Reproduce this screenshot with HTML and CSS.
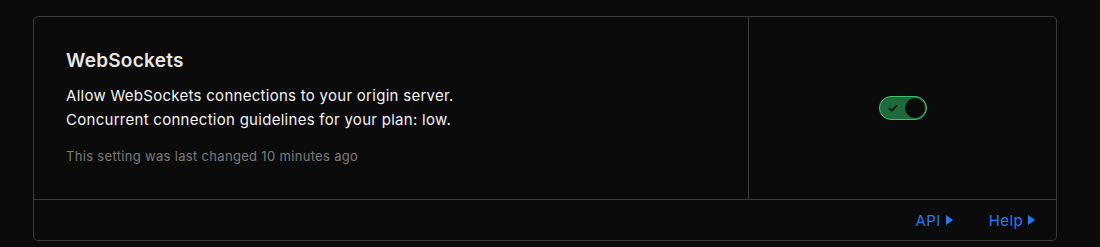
FILE: index.html
```html
<!DOCTYPE html>
<html>
<head>
<meta charset="utf-8">
<link rel="stylesheet" href="styles.css">
</head>
<body>
<div class="card">
  <div class="main">
    <div class="info">
      <h3 class="title">WebSockets</h3>
      <p class="desc">Allow WebSockets connections to your origin server.<br>Concurrent connection guidelines for your plan: low.</p>
      <p class="meta">This setting was last changed 10 minutes ago</p>
    </div>
    <div class="control">
      <button class="toggle" aria-pressed="true">
        <svg class="check" width="10" height="8" viewBox="0 0 10 8"><path d="M1 4 L3.8 6.6 L9 1.2" fill="none" stroke="#0b0b0b" stroke-width="1.6"/></svg>
        <span class="knob"></span>
      </button>
    </div>
  </div>
  <div class="footer">
    <a class="link" href="#">API <span class="tri"></span></a>
    <a class="link" href="#">Help <span class="tri"></span></a>
  </div>
</div>
</body>
</html>
```
FILE: styles.css
```css
* { box-sizing: border-box; }
html, body { margin: 0; background: #0b0b0b; }
body { padding: 16px 43px 0 33px; font-family: Inter, "Noto Sans", sans-serif; }
.card {
  border: 1px solid #3b3b3b;
  border-radius: 5px;
  width: 1024px;
  height: 225px;
  display: flex;
  flex-direction: column;
}
.main { display: flex; flex: 1; border-bottom: 1px solid #3b3b3b; }
.info { flex: 1; padding: 32px 32px 0 32px; border-right: 1px solid #3b3b3b; }
.title { margin: 0; font-size: 19px; font-weight: 600; color: #e6e6e6; line-height: 24px; letter-spacing: 0.25px; }
.desc { margin: 11px 0 0; font-size: 15px; line-height: 24px; color: #f2f2f2; letter-spacing: 0.28px; }
.meta { margin: 15px 0 0; font-size: 13px; line-height: 18px; color: #7b7b7b; letter-spacing: 0.32px; }
.control { width: 307px; display: flex; align-items: center; justify-content: center; }
.toggle {
  width: 48px; height: 24px; border-radius: 12px;
  background: #1d6a3a; border: 1px solid #3fc46e;
  padding: 0 1px 0 0; display: flex; align-items: center; justify-content: space-between;
  cursor: pointer;
}
.check { margin-left: 8px; }
.knob { width: 20px; height: 20px; border-radius: 50%; background: #0b0b0b; }
.footer { height: 40px; display: flex; align-items: center; justify-content: flex-end; gap: 36px; padding-right: 21px; }
.link { color: #2279f7; text-decoration: none; font-size: 15px; letter-spacing: 0.4px; display: flex; align-items: center; gap: 5px; }
.tri { width: 0; height: 0; border-top: 5.5px solid transparent; border-bottom: 5.5px solid transparent; border-left: 7px solid #2279f7; }
```
